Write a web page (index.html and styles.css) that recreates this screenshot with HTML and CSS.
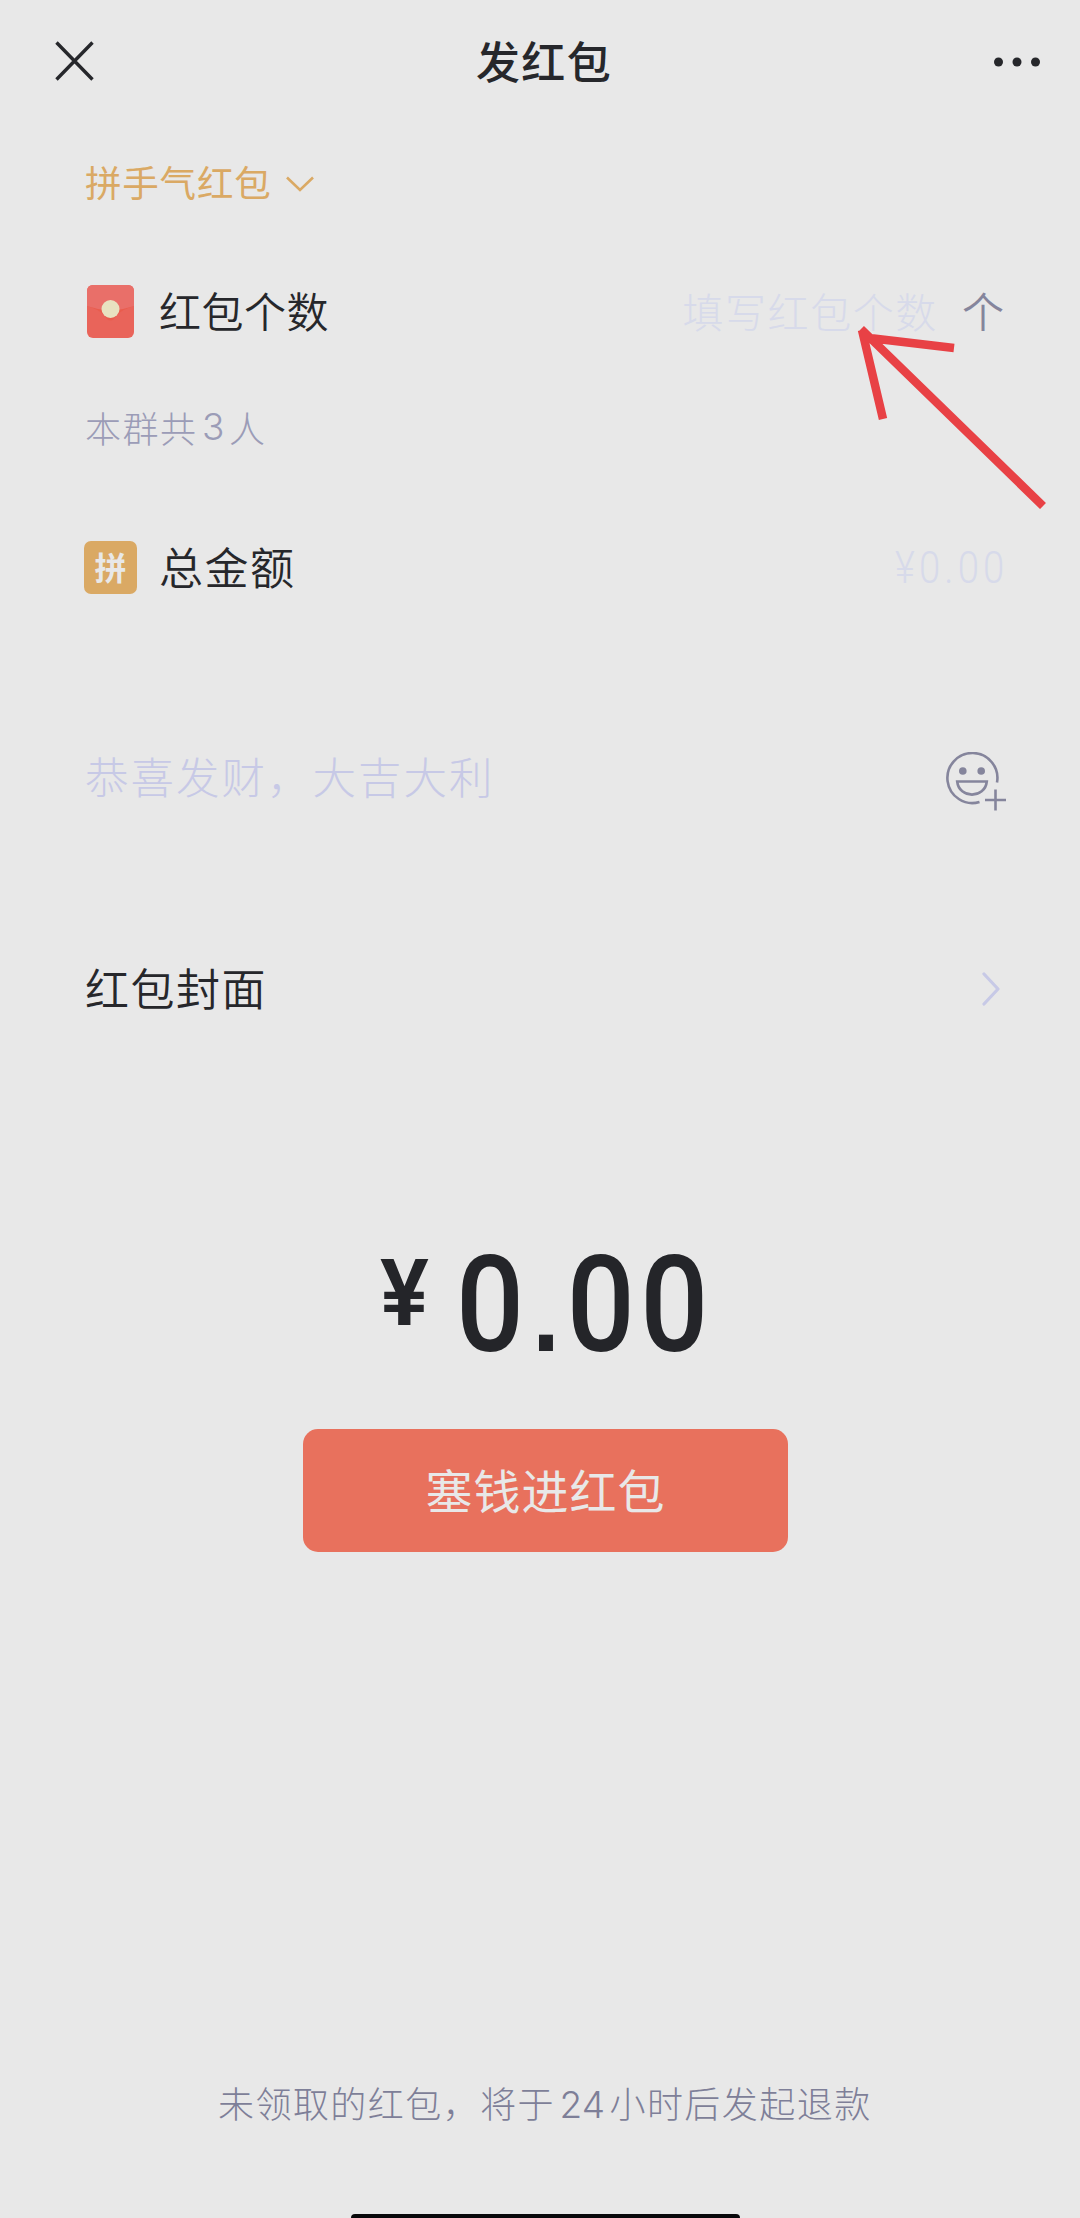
FILE: index.html
```html
<!DOCTYPE html>
<html lang="zh-CN">
<head>
<meta charset="utf-8">
<title>发红包</title>
<link rel="stylesheet" href="styles.css">
</head>
<body>
<main class="page">
  <header class="header">
    <svg class="close" width="39" height="40" viewBox="0 0 39 40"><path d="M1.500 1.500L37.500 38.500M37.500 1.500L1.500 38.500"/></svg>
    <h1 class="title">发红包</h1>
    <svg class="more" width="46" height="10" viewBox="0 0 46 10"><circle cx="4.500" cy="5" r="4.500"/><circle cx="23" cy="5" r="4.500"/><circle cx="41.500" cy="5" r="4.500"/></svg>
  </header>

  <div class="row type">
    <span class="type-name">拼手气红包</span>
    <svg class="down" width="28" height="16" viewBox="0 0 28 16"><path d="M1 1.500L14 14L27 1.500"/></svg>
  </div>

  <div class="row count">
    <svg class="icon envelope" width="53" height="53" viewBox="0 0 53 53">
      <rect x="3" width="47" height="53" rx="6" fill="#e9645a"/>
      <path d="M3 21Q14 24 20 30Q26.500 41 33 30Q39 24 50 21Z" fill="#e95c4d"/>
      <path d="M3 6Q3 0 9 0H44Q50 0 50 6V21Q38 25 26.500 26Q15 25 3 21Z" fill="#e96f69"/>
      <circle cx="26.500" cy="24" r="9" fill="#e8e2c0"/>
    </svg>
    <span class="label label-count">红包个数</span>
    <span class="hint hint-count">填写红包个数</span>
    <span class="unit">个</span>
    <svg class="arrow" width="200" height="190" viewBox="0 0 200 190"><path d="M11 10L193 187M11 18L104 29M12 11L33 100"/></svg>
  </div>

  <div class="row note">本群共<span class="num">3</span>人</div>

  <div class="row amount">
    <span class="icon tile">拼</span>
    <span class="label">总金额</span>
    <span class="hint hint-amount">¥0.00</span>
  </div>

  <div class="row greeting">
    <span class="wish">恭喜发财，大吉大利</span>
    <svg class="smile" width="62" height="60" viewBox="0 0 62 60">
      <path d="M52 30.500A25 25 0 1 0 34.500 50"/>
      <path d="M12.200 29.500H41.800C40 47 14 47 12.200 29.500Z"/>
      <path d="M50.500 37.500V58.500M40 48H61"/>
      <circle cx="17.800" cy="19" r="3.800"/><circle cx="36.200" cy="19" r="3.800"/>
    </svg>
  </div>

  <div class="row cover">
    <span class="label">红包封面</span>
    <svg class="next" width="18" height="34" viewBox="0 0 18 34"><path d="M2 2L16 17L2 32"/></svg>
  </div>

  <div class="total"><span class="yen">¥</span><span class="sum">0<span class="dot">.</span>00</span></div>

  <button class="send" type="button">塞钱进红包</button>

  <footer class="refund">未领取的红包，将于<span class="num">24</span>小时后发起退款</footer>
  <div class="home-bar"></div>
</main>
</body>
</html>
```
FILE: styles.css
```css
* { box-sizing: border-box; }

body {
  margin: 0;
  background: #e8e8e8;
  color: #26272b;
  font-family: "Noto Sans CJK SC", "Noto Sans", sans-serif;
}

.page {
  display: flex;
  flex-direction: column;
  width: 1080px;
  height: 2218px;
  overflow: hidden;
}

svg { flex: none; fill: none; }

.header {
  display: grid;
  grid-template-columns: 200px 1fr 200px;
  align-items: center;
  height: 118px;
  padding: 0 40px 0 55px;
}
.close { margin-top: 4px; stroke: #26272b; stroke-width: 3.400; }
.more { margin-top: 5px; justify-self: end; fill: #26272b; }
.title {
  margin: 2px 0 0 -7px;
  text-align: center;
  font-size: 44px;
  font-weight: 500;
  letter-spacing: 1.300px;
  line-height: 60px;
}

.row {
  display: flex;
  align-items: center;
  flex: none;
  padding: 1px 76px 0 85px;
  white-space: nowrap;
}

.type { height: 126px; color: #daa964; }
.type-name { font-size: 36.500px; letter-spacing: .8px; }
.down { margin: 5px 0 0 14px; stroke: #daa964; stroke-width: 2.600; }

.count { position: relative; height: 130px; }
.icon { flex: none; width: 53px; height: 53px; margin: 4px 22px 0 -1px; }
.label { font-size: 44px; font-weight: 350; letter-spacing: 1.500px; }
.label-count { font-size: 42px; letter-spacing: .5px; }
.hint { margin-left: auto; color: #d7daea; font-weight: 200; }
.hint-count { font-size: 41px; letter-spacing: 1.600px; }
.unit { margin-left: 24px; font-size: 42px; font-weight: 350; color: #85859c; }
.arrow {
  position: absolute;
  left: 850px;
  top: 75px;
  stroke: #e84145;
  stroke-width: 8.500;
}

.note {
  height: 104px;
  color: #9b9cb7;
  font-size: 36px;
  font-weight: 300;
  letter-spacing: 1.500px;
}
.num { margin: 0 4.500px; font-family: Inter, sans-serif; font-size: 37px; letter-spacing: 0; }

.amount { height: 174px; }
.tile {
  display: flex;
  align-items: center;
  justify-content: center;
  padding-bottom: 4px;
  border-radius: 7px;
  background: #daa964;
  color: #e8e8e8;
  font-size: 32px;
  font-weight: 700;
}
.hint-amount {
  margin: 5px -4px 0 auto;
  font-family: Roboto, sans-serif;
  font-size: 44px;
  font-weight: 300;
  letter-spacing: 4.800px;
  transform: scaleX(.87);
  transform-origin: right center;
}

.greeting { height: 246px; }
.wish { color: #c7c9e6; font-size: 43.500px; font-weight: 300; letter-spacing: 2px; }
.smile { margin: 12px -3px 0 auto; stroke: #85859c; stroke-width: 2.600; }
.smile circle { fill: #85859c; stroke: none; }

.cover { height: 177px; }
.next { margin: 4px 4px 0 auto; stroke: #c7c9e6; stroke-width: 3.200; stroke-linecap: round; stroke-linejoin: round; }

.total {
  display: flex;
  align-items: flex-start;
  flex: none;
  height: 354px;
  padding: 164px 0 0 380px;
  color: #242529;
  font-family: Roboto, sans-serif;
  font-weight: 600;
  line-height: 1;
}
.yen { width: 76px; margin-top: 8px; font-size: 93.500px; transform: scaleX(.98); transform-origin: left; }
.sum { font-size: 133px; font-weight: 500; letter-spacing: 6px; transform: scaleX(.9); transform-origin: left; }
.dot { margin: 0 2px 0 3px; font-family: "Liberation Sans", sans-serif; font-size: 110px; font-weight: 700; line-height: 0; }

.send {
  flex: none;
  width: 485px;
  height: 123px;
  margin-left: 303px;
  padding: 0 0 5px;
  border: 0;
  border-radius: 15px;
  background: #e8715d;
  color: #e8e8e8;
  font: 400 47px "Noto Sans CJK SC", sans-serif;
  letter-spacing: 1px;
}

.refund {
  flex: none;
  height: 80px;
  margin: 510px 0 0 218px;
  color: #7e7f98;
  font-size: 36px;
  font-weight: 300;
  line-height: 80px;
  letter-spacing: 1.450px;
  white-space: nowrap;
}

.home-bar {
  flex: none;
  width: 389px;
  height: 4px;
  margin: auto 0 0 351px;
  border-radius: 6px 6px 0 0;
  background: #08080a;
}
```
